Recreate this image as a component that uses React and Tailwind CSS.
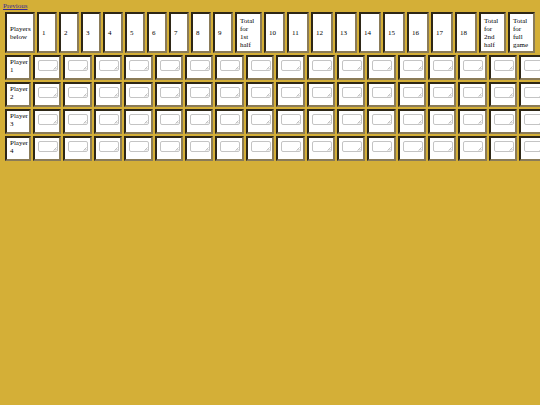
import React from 'react';

const holes = ['1', '2', '3', '4', '5', '6', '7', '8', '9'];
const back = ['10', '11', '12', '13', '14', '15', '16', '17', '18'];
const players = ['1', '2', '3', '4'];

const cell =
  'border-2 border-t-[#2e2716] border-l-[#2e2716] border-r-[#8a7b58] border-b-[#8a7b58] bg-white text-left font-normal text-black';

function HeadCell({ w, children }) {
  return <th className={`${cell} ${w} px-[3px] py-[2px] align-middle`}>{children}</th>;
}

function ScoreBox() {
  return (
    <div className="relative h-[11px] w-[20px]">
      <textarea
        rows={1}
        readOnly
        className="block h-[11px] w-[20px] resize-none rounded-[2px] border border-[#c4c4c4] bg-white"
      />
      <svg className="absolute bottom-[1px] right-[1px]" width="4" height="4" viewBox="0 0 4 4">
        <path d="M0.5 3.5 L3.5 0.5 M2 3.5 L3.5 2" stroke="#b0b0b0" strokeWidth="0.8" />
      </svg>
    </div>
  );
}

export default function App() {
  const cols = Array.from({ length: 21 }, (_, i) => i);

  return (
    <div
      className="min-h-[405px] w-[540px] overflow-hidden bg-[#d4af37] pl-[3px] text-[7px] leading-[8px] text-black"
      style={{ fontFamily: '"Liberation Serif", "Times New Roman", serif' }}
    >
      <a href="#" className="block pt-[2px] text-[7px] leading-[8px] text-[#3b2a94] underline">
        Previous
      </a>

      <table className="table-fixed w-[534px] border-separate border-spacing-[2px]">
        <thead>
          <tr className="h-[41px]">
            <HeadCell w="w-[30px]">Players below</HeadCell>
            {holes.map((h) => (
              <HeadCell key={h} w="w-[20px]">{h}</HeadCell>
            ))}
            <HeadCell w="w-[27px]">Total for 1st half</HeadCell>
            {back.map((h) => (
              <HeadCell key={h} w={h === '10' ? 'w-[21px]' : 'w-[22px]'}>{h}</HeadCell>
            ))}
            <HeadCell w="w-[27px]">Total for 2nd half</HeadCell>
            <HeadCell w="w-[27px]">Total for full game</HeadCell>
          </tr>
        </thead>
      </table>

      <table className="-mt-[2px] table-fixed w-[668px] border-separate border-spacing-[2px]">
        <tbody>
          {players.map((p) => (
            <tr key={p} className="h-[25px]">
              <td className={`${cell} w-[26px] px-[3px] py-[1px] align-top`}>
                Player {p}
              </td>
              {cols.map((c) => (
                <td key={c} className={`${cell} w-[28.4px] px-[3px] pt-[3px] align-top`}>
                  <ScoreBox />
                </td>
              ))}
            </tr>
          ))}
        </tbody>
      </table>
    </div>
  );
}
